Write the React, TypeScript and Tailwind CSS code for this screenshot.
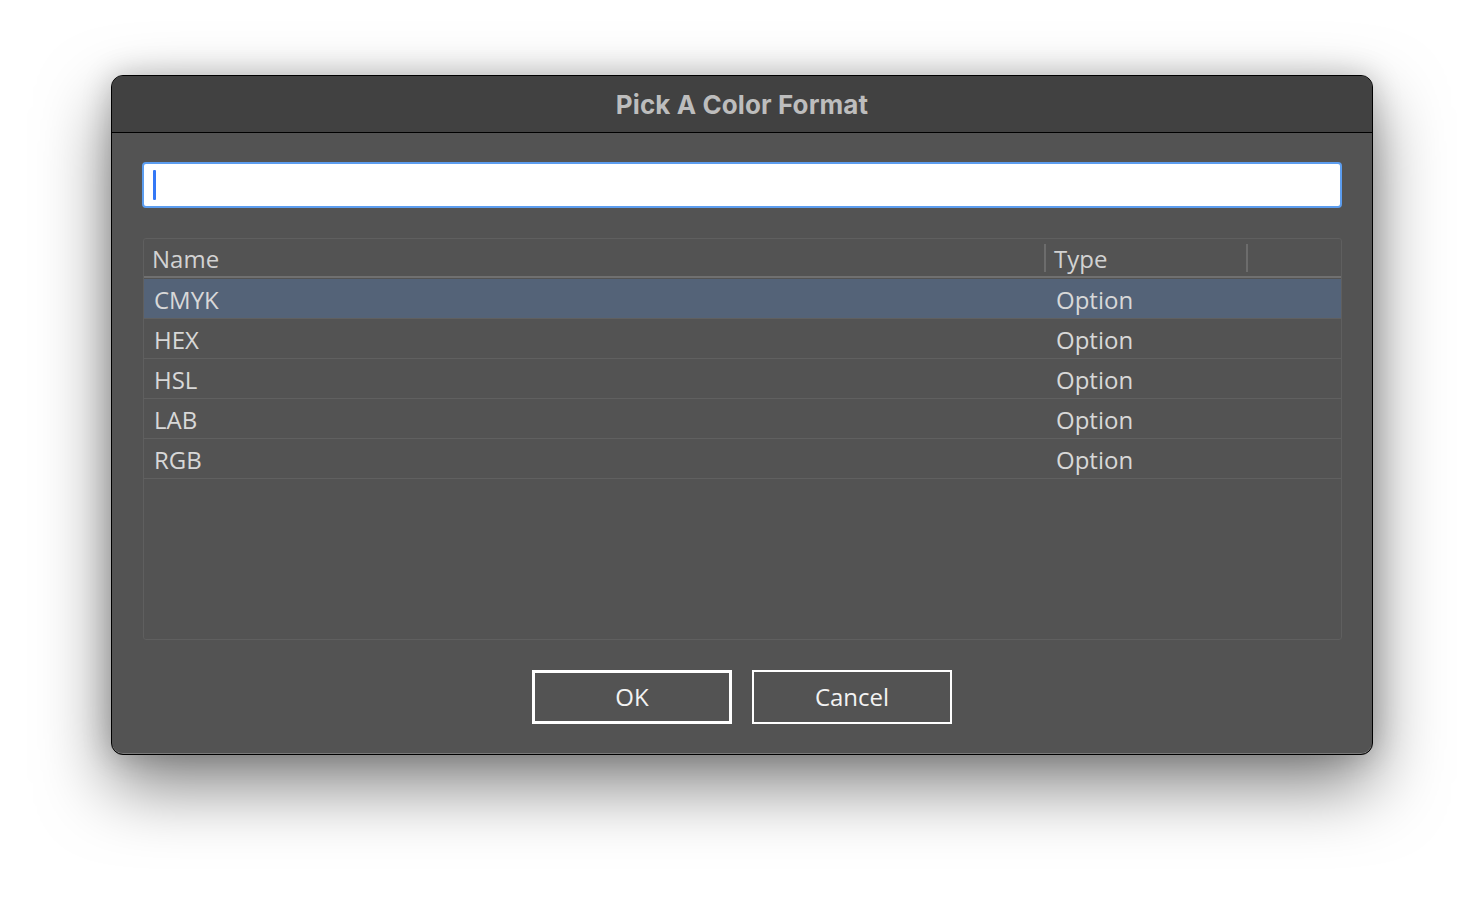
import React from "react";

const rows = ["CMYK", "HEX", "HSL", "LAB", "RGB"];

export default function App() {
  return (
    <div className="min-h-screen w-full bg-white flex justify-center pt-[75px]" style={{ fontFamily: '"Open Sans", "Liberation Sans", sans-serif' }}>
      <div className="w-[1262px] h-[680px] rounded-[12px] border border-black bg-[#535353] overflow-hidden flex flex-col shadow-[inset_0_-1px_0_#7a7a7a,0_30px_70px_rgba(0,0,0,0.5),0_0_30px_rgba(0,0,0,0.2)]">
        <div className="h-[57px] bg-[#414141] border-b border-black flex items-center justify-center shrink-0">
          <span className="text-[26px] font-bold text-[#bdbdbd] tracking-[0.1px]" style={{ fontFamily: 'Inter, "Open Sans", sans-serif' }}>
            Pick A Color Format
          </span>
        </div>
        <div className="flex-1 px-[30px] pt-[29px] flex flex-col">
          <div className="h-[46px] border-2 border-[#5c9def] rounded-[4px] bg-white flex items-center pl-[9px]">
            <div className="w-[3px] h-[30px] bg-[#3478f6] rounded-[1px]" />
          </div>
          <div className="mt-[30px] ml-px h-[402px] border border-[#5f5f5f] rounded-[3px] flex flex-col">
            <div className="h-[39px] border-b-2 border-[#707070] flex items-stretch text-[24px] font-medium text-[#d2d2d2] shrink-0">
              <div className="w-[900px] flex items-center pl-[8px] pt-[2px]">Name</div>
              <div className="w-[2px] bg-[#6c6c6c] my-[5px] mb-[4px]" />
              <div className="w-[200px] flex items-center pl-[8px] pt-[2px]">Type</div>
              <div className="w-[2px] bg-[#6c6c6c] my-[5px] mb-[4px]" />
              <div className="flex-1" />
            </div>
            <div className="h-px" />
            {rows.map((r, i) => (
              <div
                key={r}
                className={`h-[40px] border-b border-[#606060] flex items-center pt-[2px] text-[24px] font-medium text-[#d8d8d8] shrink-0 ${i === 0 ? "bg-[#546378]" : ""}`}
              >
                <div className="w-[902px] pl-[10px]">{r}</div>
                <div className="pl-[10px]">Option</div>
              </div>
            ))}
          </div>
          <div className="mt-[30px] flex justify-center gap-[20px]">
            <button className="w-[200px] h-[54px] border-[3px] border-white text-[24px] font-medium text-[#f2f2f2] flex items-center justify-center">
              OK
            </button>
            <button className="w-[200px] h-[54px] border-2 border-white text-[24px] font-medium text-[#f2f2f2] flex items-center justify-center">
              Cancel
            </button>
          </div>
        </div>
      </div>
    </div>
  );
}
